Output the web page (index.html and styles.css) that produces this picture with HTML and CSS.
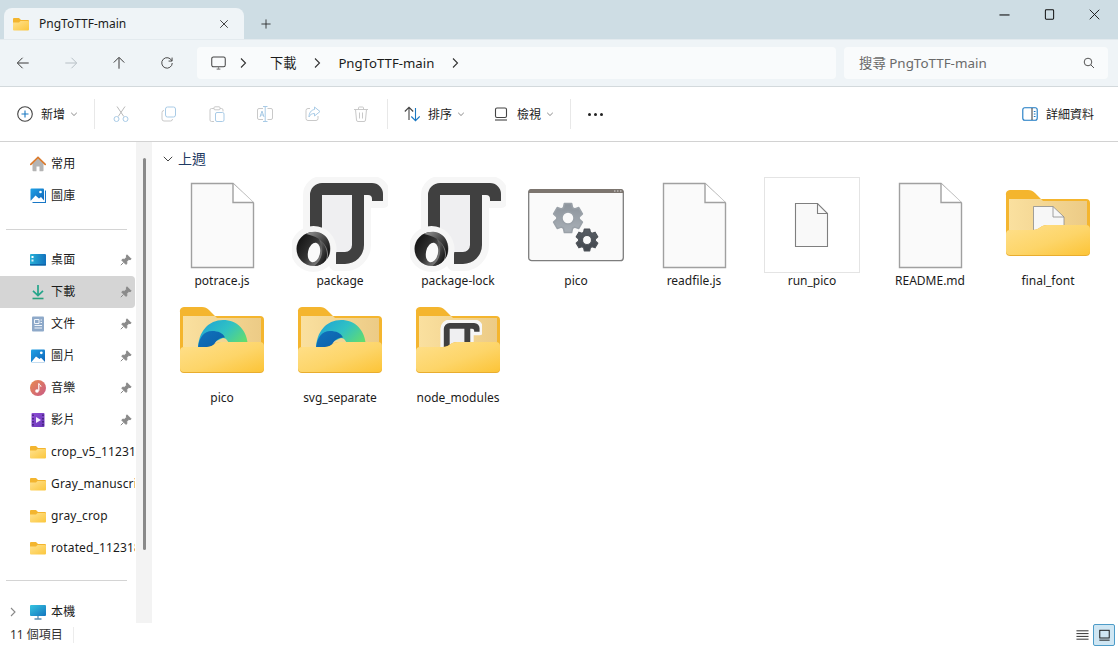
FILE: index.html
```html
<!DOCTYPE html>
<html lang="zh-Hant">
<head>
<meta charset="utf-8">
<title>PngToTTF-main</title>
<link rel="stylesheet" href="styles.css">
</head>
<body>
<svg class="defs" aria-hidden="true">
  <defs>
    <linearGradient id="gFront" x1="0" y1="0" x2="1" y2="1"><stop offset="0" stop-color="#ffe08c"/><stop offset=".55" stop-color="#fdd569"/><stop offset="1" stop-color="#fcc437"/></linearGradient>
    <linearGradient id="gPanel" x1="0" y1="0" x2="1" y2="0"><stop offset="0" stop-color="#fae09f"/><stop offset="1" stop-color="#eccb86"/></linearGradient>
    <linearGradient id="gEdge" x1="0" y1="0" x2="1" y2=".6"><stop offset="0" stop-color="#1c9fd8"/><stop offset=".55" stop-color="#30c1c4"/><stop offset="1" stop-color="#62dc6f"/></linearGradient>
    <linearGradient id="gEdgeDark" x1="0" y1="0" x2="1" y2="1"><stop offset="0" stop-color="#1172bd"/><stop offset="1" stop-color="#0a5ea6"/></linearGradient>
    <linearGradient id="gRing" x1="0" y1=".2" x2="1" y2=".8"><stop offset="0" stop-color="#101010"/><stop offset=".45" stop-color="#333"/><stop offset=".75" stop-color="#777"/><stop offset="1" stop-color="#a8a8a8"/></linearGradient>
    <linearGradient id="gRing2" x1="0" y1="0" x2="1" y2="1"><stop offset="0" stop-color="#9a9a9a"/><stop offset=".55" stop-color="#3d3d3d"/><stop offset="1" stop-color="#050505"/></linearGradient>
    <linearGradient id="gCogA" x1="0" y1="0" x2="0" y2="1"><stop offset="0" stop-color="#8c939b"/><stop offset="1" stop-color="#a9b0b7"/></linearGradient>
    <linearGradient id="gCogB" x1="0" y1="0" x2="0" y2="1"><stop offset="0" stop-color="#595f66"/><stop offset="1" stop-color="#41464c"/></linearGradient>
    <linearGradient id="gSmallFolder" x1="0" y1="0" x2="1" y2="1"><stop offset="0" stop-color="#ffe28f"/><stop offset="1" stop-color="#fbc63c"/></linearGradient>
    <linearGradient id="gBlue" x1="0" y1="0" x2="1" y2="1"><stop offset="0" stop-color="#1fa2e6"/><stop offset="1" stop-color="#0e63b8"/></linearGradient>
    <linearGradient id="gDesk" x1="0" y1="0" x2="1" y2="0"><stop offset="0" stop-color="#29b2d8"/><stop offset="1" stop-color="#1272bd"/></linearGradient>
    <linearGradient id="gMusic" x1="0" y1="0" x2="1" y2="1"><stop offset="0" stop-color="#e98b4e"/><stop offset="1" stop-color="#c95a86"/></linearGradient>
    <linearGradient id="gVideo" x1="0" y1="0" x2="1" y2="1"><stop offset="0" stop-color="#8f4fd6"/><stop offset="1" stop-color="#6a36b8"/></linearGradient>
    <linearGradient id="gPc" x1="0" y1="0" x2="1" y2="1"><stop offset="0" stop-color="#37c5e0"/><stop offset="1" stop-color="#1375bf"/></linearGradient>

    <symbol id="file" viewBox="0 0 96 96">
      <path d="M17.5 6.5H59L79.5 26V90.500H17.500Z" fill="#fafafa" stroke="#a0a0a0" stroke-width="1.4"/>
      <path d="M59 6.500V25.500H79.500" fill="#fff" stroke="#a0a0a0" stroke-width="1.4"/>
    </symbol>
    <symbol id="json-shape" viewBox="0 0 96 96">
      <path d="M18 60V18A12 12 0 0 1 30 6H80A11 11 0 0 1 91 17V24H80V22A4 4 0 0 0 76 18H72V68A19 19 0 0 1 53 87H44V75H53A7 7 0 0 0 60 68V18H30V60Z" fill="#f6f6f6" stroke="#f6f6f6" stroke-width="14" stroke-linejoin="round"/>
      <path d="M30 18H60V75H30Z" fill="#efeff1"/>
      <path d="M18 60V18A12 12 0 0 1 30 6H80A11 11 0 0 1 91 17V24H80V22A4 4 0 0 0 76 18H72V68A19 19 0 0 1 53 87H44V75H53A7 7 0 0 0 60 68V18H30V60Z" fill="#404040"/>
    </symbol>
    <symbol id="json" viewBox="0 0 96 96">
      <use href="#json-shape" width="96" height="96"/>
      <circle cx="21.500" cy="72" r="23" fill="#f6f6f6"/>
      <circle cx="21.500" cy="72" r="17" fill="url(#gRing)"/>
      <path d="M14 57C20 53 30 54 35 61C39 67 39 77 35 82C38 74 33 66 27 62C22 59 18 58 14 57Z" fill="url(#gRing2)"/>
      <path d="M27 62C33 67 37 75 34 83C31 87 27 89 22 89C28 85 31 78 30 71C29 67 28 64 27 62Z" fill="url(#gRing2)"/>
      <ellipse cx="22" cy="75.500" rx="6" ry="10" transform="rotate(12 22 75.500)" fill="#fafafa"/>
    </symbol>
    <symbol id="folder-back" viewBox="0 0 96 96">
      <path d="M6 18A4 4 0 0 1 10 13H28C31 13 33 14 35 16L41 22H86A4 4 0 0 1 90 26V60H6Z" fill="#f4b52e"/>
      <path d="M9 22H41L43 24H87V56H9Z" fill="url(#gPanel)"/>
    </symbol>
    <symbol id="folder-front" viewBox="0 0 96 96">
      <path d="M6 57A4 4 0 0 1 10 53H33C36 53 38 52 40 50.500C42 49 44 48 47 48H86A4 4 0 0 1 90 52V75A4 4 0 0 1 86 79H10A4 4 0 0 1 6 75Z" fill="#e9ad2e"/>
      <path d="M6 57A4 4 0 0 1 10 53H33C36 53 38 52 40 50.500C42 49 44 48 47 48H86A4 4 0 0 1 90 52V74A4 4 0 0 1 86 78H10A4 4 0 0 1 6 74Z" fill="url(#gFront)"/>
    </symbol>
    <symbol id="edge" viewBox="0 0 96 96">
      <path d="M24 56C24 37 35 26 49 26C63 26 74 36 74 54H56C55 47 52 44 49 44L40 48Z" fill="url(#gEdge)"/>
      <path d="M24 56C24 44 30 37 38 37C44 37 49 39 51 43.500C46 43 40 47 38 56Z" fill="url(#gEdgeDark)"/>
    </symbol>
    <symbol id="cog" viewBox="-1.2 -1.2 2.4 2.4">
      <path fill-rule="evenodd" stroke-width=".1" stroke-linejoin="round" d="M-.305-.685L-.242-.97L.242-.97L.305-.685L.441-.607L.719-.695L.961-.276L.746-.078L.746.078L.961.276L.719.695L.441.607L.305.685L.242.97L-.242.97L-.305.685L-.441.607L-.719.695L-.961.276L-.746.078L-.746-.078L-.961-.276L-.719-.695L-.441-.607ZM.4 0A.4 .4 0 1 0 -.4 0A.4 .4 0 1 0 .4 0Z"/>
    </symbol>
    <symbol id="sfolder" viewBox="0 0 16 16">
      <path d="M0 3A1 1 0 0 1 1 2H6L8 4H15A1 1 0 0 1 16 5V8H0Z" fill="#f3b52f"/>
      <path d="M0 6.500H6L7.500 5H15A1 1 0 0 1 16 6V13.500A1 1 0 0 1 15 14.500H1A1 1 0 0 1 0 13.500Z" fill="url(#gSmallFolder)"/>
    </symbol>
    <symbol id="pin" viewBox="0 0 12 12">
      <path d="M7 .8L11.200 5L10.200 5.600L8.700 5.500L6.800 7.500L6.800 9.800L5.800 10.300L1.800 6.200L2.400 5.300L4.600 5.200L6.500 3.300L6.400 1.700ZM3.500 8.500L.8 11.200" fill="#8a8a8a" stroke="#8a8a8a"/>
    </symbol>
    <symbol id="chev-small" viewBox="0 0 8 8"><path d="M1.200 2.800L4 5.500L6.800 2.800" fill="none" stroke="#8b8b8b"/></symbol>
    <symbol id="chev-right" viewBox="0 0 10 12"><path d="M3 1.500L7.500 6L3 10.500" fill="none" stroke="#333" stroke-width="1.100"/></symbol>
  </defs>
</svg>

<header class="titlebar">
  <div class="tab">
    <svg class="tab-folder"><use href="#sfolder"/></svg>
    <span class="tab-title">PngToTTF-main</span>
    <svg class="tab-close" viewBox="0 0 12 12"><path d="M1.500 1.500L10.500 10.500M10.500 1.500L1.500 10.500" stroke="#222" fill="none" stroke-width="1"/></svg>
  </div>
  <svg class="new-tab" viewBox="0 0 12 12"><path d="M6 .5V11.500M.5 6H11.500" stroke="#222" fill="none" stroke-width="1"/></svg>
  <div class="win-controls">
    <span class="win-btn"><svg viewBox="0 0 12 12"><path d="M.5 6.500H11.500" stroke="#111" fill="none" stroke-width="1.200"/></svg></span>
    <span class="win-btn"><svg viewBox="0 0 12 12"><rect x="1.500" y=".8" width="9" height="10.400" rx="1" stroke="#111" fill="none" stroke-width="1.100"/></svg></span>
    <span class="win-btn"><svg viewBox="0 0 12 12"><path d="M.8 .8L11.200 11.200M11.200 .8L.8 11.200" stroke="#111" fill="none"/></svg></span>
  </div>
</header>

<nav class="navbar">
  <div class="nav-buttons">
    <span class="nav-btn"><svg viewBox="0 0 16 16"><path d="M14.500 8H2M7.500 2L1.500 8L7.500 14" stroke="#333" fill="none" stroke-width="1.100"/></svg></span>
    <span class="nav-btn"><svg viewBox="0 0 16 16"><path d="M1.500 8H14M8.500 2L14.500 8L8.500 14" stroke="#b4bdc3" fill="none" stroke-width="1.100"/></svg></span>
    <span class="nav-btn"><svg viewBox="0 0 16 16"><path d="M8 14.500V2M2 7.500L8 1.500L14 7.500" stroke="#333" fill="none" stroke-width="1.100"/></svg></span>
    <span class="nav-btn"><svg viewBox="0 0 16 16"><path d="M13.500 5.500A6 6 0 1 0 14 8M13.800 1.800V5.800H9.800" stroke="#444" fill="none" stroke-width="1.100"/></svg></span>
  </div>
  <div class="address">
    <svg class="addr-pc" viewBox="0 0 16 16"><rect x=".8" y="1" width="14.400" height="10.500" rx="1.800" fill="none" stroke="#444" stroke-width="1.100"/><path d="M6 14H10M8 11.500V14" stroke="#888" fill="none" stroke-width="1.200"/></svg>
    <svg class="addr-chev first"><use href="#chev-right"/></svg>
    <span class="crumb">下載</span>
    <svg class="addr-chev"><use href="#chev-right"/></svg>
    <span class="crumb">PngToTTF-main</span>
    <svg class="addr-chev"><use href="#chev-right"/></svg>
  </div>
  <div class="search">
    <span class="search-text">搜尋 PngToTTF-main</span>
    <svg class="search-icon" viewBox="0 0 12 12"><circle cx="5" cy="5" r="3.800" fill="none" stroke="#555"/><path d="M7.800 7.800L11 11" stroke="#555" fill="none"/></svg>
  </div>
</nav>

<div class="toolbar">
  <div class="tool-labeled tool-new">
    <svg class="tool-icon" viewBox="0 0 16 16"><circle cx="8" cy="8" r="7.300" fill="none" stroke="#444" stroke-width="1.100"/><path d="M8 4.500V11.500M4.500 8H11.500" stroke="#1a78c2" fill="none" stroke-width="1.100"/></svg>
    <span>新增</span>
    <svg class="tool-chev"><use href="#chev-small"/></svg>
  </div>
  <i class="tool-sep first"></i>
  <div class="tool-group">
    <span class="tool-btn"><svg viewBox="0 0 16 16"><path d="M4 .5L10.800 10.500M12 .5L5.200 10.500" stroke="#b9b9b9" fill="none"/><circle cx="3.500" cy="13" r="2.500" fill="none" stroke="#a9cbe6"/><circle cx="12.500" cy="13" r="2.500" fill="none" stroke="#a9cbe6"/></svg></span>
    <span class="tool-btn"><svg viewBox="0 0 16 16"><rect x="4.500" y="1" width="10" height="10" rx="2" fill="none" stroke="#a9cbe6"/><path d="M3 4.500A2 2 0 0 0 1 6.500V13A2 2 0 0 0 3 15H9.500A2 2 0 0 0 11.500 13" fill="none" stroke="#c9c9c9"/></svg></span>
    <span class="tool-btn"><svg viewBox="0 0 16 16"><path d="M5 2.500H2.500A1.500 1.500 0 0 0 1 4V14A1.500 1.500 0 0 0 2.500 15.500H5M11 2.500H12.500A1.500 1.500 0 0 1 14 4V5.500" fill="none" stroke="#c9c9c9"/><rect x="5" y=".8" width="6" height="3" rx="1" fill="none" stroke="#c9c9c9"/><rect x="6.500" y="6.500" width="8.500" height="9" rx="1.500" fill="none" stroke="#a9cbe6"/></svg></span>
    <span class="tool-btn"><svg viewBox="0 0 16 16"><path d="M6 2.500H2A1.500 1.500 0 0 0 .5 4V12A1.500 1.500 0 0 0 2 13.500H6M10.500 2.500H14A1.500 1.500 0 0 1 15.500 4V12A1.500 1.500 0 0 1 14 13.500H10.500" fill="none" stroke="#c9c9c9"/><path d="M8.200 .5V15.500M6 .5H10.500M6 15.500H10.500" fill="none" stroke="#a9cbe6"/><path d="M3 11L5 5L7 11M3.700 9H6.300" fill="none" stroke="#a9cbe6"/></svg></span>
    <span class="tool-btn"><svg viewBox="0 0 16 16"><path d="M5 2.500H3A2 2 0 0 0 1 4.500V12.500A2 2 0 0 0 3 14.500H11A2 2 0 0 0 13 12.500V10" fill="none" stroke="#c9c9c9"/><path d="M9.500 1L15 5.500L9.500 10V7.500C7 7.500 5 8.500 4 11C4 7 6 4 9.500 3.500Z" fill="none" stroke="#a9cbe6"/></svg></span>
    <span class="tool-btn"><svg viewBox="0 0 16 16"><path d="M1 3.500H15M5.500 3.500V2A1 1 0 0 1 6.500 1H9.500A1 1 0 0 1 10.500 2V3.500M2.500 3.500L3.500 14A1.500 1.500 0 0 0 5 15.500H11A1.500 1.500 0 0 0 12.500 14L13.500 3.500M6.500 6.500V12.500M9.500 6.500V12.500" fill="none" stroke="#c9c9c9"/></svg></span>
  </div>
  <i class="tool-sep"></i>
  <div class="tool-labeled tool-sort">
    <svg class="tool-icon" viewBox="0 0 16 16"><path d="M5 14V1.500M.8 5.500L5 1.300L9.200 5.500" fill="none" stroke="#444" stroke-width="1.100"/><path d="M11.500 2V14.500M7.300 10.500L11.500 14.700L15.700 10.500" fill="none" stroke="#1a78c2" stroke-width="1.100"/></svg>
    <span>排序</span>
    <svg class="tool-chev"><use href="#chev-small"/></svg>
  </div>
  <div class="tool-labeled tool-view">
    <svg class="tool-icon" viewBox="0 0 16 16"><rect x="2.500" y="2" width="11" height="9.500" rx="1.500" fill="none" stroke="#444" stroke-width="1.100"/><path d="M2 14H14" stroke="#444" fill="none" stroke-width="1.100"/></svg>
    <span>檢視</span>
    <svg class="tool-chev"><use href="#chev-small"/></svg>
  </div>
  <i class="tool-sep view-sep"></i>
  <span class="tool-more"><i></i><i></i><i></i></span>
  <div class="tool-labeled tool-details">
    <svg class="tool-icon" viewBox="0 0 16 16"><rect x=".8" y="1.800" width="14.400" height="12.400" rx="2" fill="none" stroke="#1a78c2" stroke-width="1.100"/><path d="M10 2V14" stroke="#333" fill="none"/><path d="M11.800 5.500H13.500M11.800 8H13.500M11.800 10.500H13.500" stroke="#1a78c2" fill="none"/></svg>
    <span>詳細資料</span>
  </div>
</div>

<main class="main">
  <aside class="sidebar">
    <div class="side-row"><svg class="side-icon" viewBox="0 0 16 16"><path d="M2.500 7.500V14.500A.8 .8 0 0 0 3.300 15.300H6.500V10.500H9.500V15.300H12.700A.8 .8 0 0 0 13.500 14.500V7.500L8 2.500Z" fill="#b4b4b4"/><path d="M.8 8.300L8 1.500L15.200 8.300" fill="none" stroke="#d9792c" stroke-width="1.700" stroke-linecap="round"/></svg><span class="side-label">常用</span></div>
    <div class="side-row"><svg class="side-icon" viewBox="0 0 16 16"><rect x=".5" y=".5" width="13.500" height="12.500" rx="1" fill="url(#gBlue)"/><path d="M.5 13L5.500 7.500L9 10.500L11 9L14 12.500V13Z" fill="#fff"/><circle cx="10.500" cy="4" r="1.300" fill="#fff"/><path d="M15.500 2.500V14.500H2.500" fill="none" stroke="#1877c6" stroke-width="1.100"/></svg><span class="side-label">圖庫</span></div>
    <hr class="side-hr first">
    <div class="side-row"><svg class="side-icon" viewBox="0 0 16 16"><rect y="2" width="16" height="11.500" rx="1" fill="url(#gDesk)"/><path d="M0 12H16V13.500H0Z" fill="#1165a8"/><rect x="1.500" y="4" width="2" height="2" fill="#fff"/><rect x="1.500" y="7.500" width="2" height="2" fill="#d5f2fb"/></svg><span class="side-label">桌面</span><svg class="side-pin"><use href="#pin"/></svg></div>
    <div class="side-row selected"><svg class="side-icon" viewBox="0 0 16 16"><path d="M8 1V11M3 6.800L8 11.500L13 6.800" fill="none" stroke="#24a58a" stroke-width="1.700"/><path d="M2.500 14.500H13.500" stroke="#2aa07c" fill="none" stroke-width="1.600"/></svg><span class="side-label">下載</span><svg class="side-pin"><use href="#pin"/></svg></div>
    <div class="side-row"><svg class="side-icon" viewBox="0 0 16 16"><rect x="2" y=".5" width="12" height="15" rx="1" fill="#8ea9c9"/><path d="M4.500 3.500H9V7.500H4.500ZM10.500 4H12M10.500 6.500H12M4.500 9.500H12M4.500 12H12" stroke="#f1f5fa" stroke-width="1" fill="none"/></svg><span class="side-label">文件</span><svg class="side-pin"><use href="#pin"/></svg></div>
    <div class="side-row"><svg class="side-icon" viewBox="0 0 16 16"><rect x="1" y="1.500" width="14" height="13" rx="1" fill="url(#gBlue)"/><path d="M1 14.500L6 8.500L9.500 11L11 9.800L15 14V14.500Z" fill="#fff"/><circle cx="11.300" cy="4.800" r="1.400" fill="#fff"/></svg><span class="side-label">圖片</span><svg class="side-pin"><use href="#pin"/></svg></div>
    <div class="side-row"><svg class="side-icon" viewBox="0 0 16 16"><circle cx="8" cy="8" r="8" fill="url(#gMusic)"/><path d="M8.800 3.500V10.800" stroke="#fff" stroke-width="1.200" fill="none"/><path d="M8.800 3.500C9.500 5 11 5 11 6.800" stroke="#fff" fill="none"/><circle cx="7" cy="11" r="1.800" fill="#fff"/></svg><span class="side-label">音樂</span><svg class="side-pin"><use href="#pin"/></svg></div>
    <div class="side-row"><svg class="side-icon" viewBox="0 0 16 16"><rect x="1.500" y="1" width="13" height="14" rx="1" fill="url(#gVideo)"/><path d="M6 5L11 8L6 11Z" fill="#f4ecff"/><path d="M3 2.500V4M3 6V7.500M3 9V10.500M3 12V13.500M13 2.500V4M13 6V7.500M13 9V10.500M13 12V13.500" stroke="#2d1a5c" stroke-width="1.200" fill="none"/></svg><span class="side-label">影片</span><svg class="side-pin"><use href="#pin"/></svg></div>
    <div class="side-row"><svg class="side-icon"><use href="#sfolder"/></svg><span class="side-label">crop_v5_1123165</span></div>
    <div class="side-row"><svg class="side-icon"><use href="#sfolder"/></svg><span class="side-label">Gray_manuscript</span></div>
    <div class="side-row"><svg class="side-icon"><use href="#sfolder"/></svg><span class="side-label">gray_crop</span></div>
    <div class="side-row"><svg class="side-icon"><use href="#sfolder"/></svg><span class="side-label">rotated_1123181</span></div>
    <hr class="side-hr">
    <div class="side-row pc-row">
      <svg class="side-expand" viewBox="0 0 8 10"><path d="M2 1L6 5L2 9" fill="none" stroke="#888" stroke-width="1.100"/></svg>
      <svg class="side-icon" viewBox="0 0 16 16"><rect y="1" width="16" height="11" rx="1" fill="url(#gPc)"/><path d="M4.500 15H11.500M8 12V15" stroke="#5b8fb3" stroke-width="1.300" fill="none"/></svg><span class="side-label">本機</span>
    </div>
  </aside>
  <div class="scroll-track"><i class="scroll-thumb"></i></div>
  <section class="content">
    <div class="group-head">
      <svg class="group-chev" viewBox="0 0 10 6"><path d="M.8 .8L5 5L9.200 .8" fill="none" stroke="#444"/></svg>
      <span>上週</span>
    </div>
    <div class="files">
      <figure class="file"><svg class="file-icon"><use href="#file"/></svg><figcaption>potrace.js</figcaption></figure>
      <figure class="file"><svg class="file-icon"><use href="#json"/></svg><figcaption>package</figcaption></figure>
      <figure class="file"><svg class="file-icon"><use href="#json"/></svg><figcaption>package-lock</figcaption></figure>
      <figure class="file">
        <svg class="file-icon" viewBox="0 0 96 96">
          <rect x=".7" y="12.700" width="94.600" height="71" rx="3" fill="#fafafa" stroke="#7d7d7d" stroke-width="1.300"/>
          <path d="M.5 16V15A3 3 0 0 1 3.500 12H92.500A3 3 0 0 1 95.500 15V16Z" fill="#7c756f"/>
          <path d="M86 14H87.500M89 14H90.500M92 14H93.500" stroke="#ddd" fill="none"/>
          <use href="#cog" x="22" y="23" width="36" height="36" fill="url(#gCogA)" stroke="#9aa1a8"/>
          <use href="#cog" x="45.500" y="49.500" width="27" height="27" fill="url(#gCogB)" stroke="#4d5258"/>
        </svg>
        <figcaption>pico</figcaption>
      </figure>
      <figure class="file"><svg class="file-icon"><use href="#file"/></svg><figcaption>readfile.js</figcaption></figure>
      <figure class="file">
        <svg class="file-icon" viewBox="0 0 96 96">
          <rect x=".5" y=".5" width="95" height="95" fill="#fff" stroke="#e4e4e4"/>
          <path d="M31.500 26.500H53.500L63.500 36.500V69.500H31.500Z" fill="#f9f9f9" stroke="#7f7f7f" stroke-width="1.100"/>
          <path d="M53.500 26.500V36.500H63.500" fill="none" stroke="#7f7f7f" stroke-width="1.100"/>
        </svg>
        <figcaption>run_pico</figcaption>
      </figure>
      <figure class="file"><svg class="file-icon"><use href="#file"/></svg><figcaption>README.md</figcaption></figure>
      <figure class="file">
        <svg class="file-icon" viewBox="0 0 96 96">
          <use href="#folder-back" width="96" height="96"/>
          <path d="M33.500 29.500H53L64 40V56H33.500Z" fill="#f7f7f7" stroke="#8c8c8c" stroke-width=".8"/>
          <path d="M53 29.500V40H64" fill="none" stroke="#8c8c8c" stroke-width=".8"/>
          <use href="#folder-front" width="96" height="96"/>
        </svg>
        <figcaption>final_font</figcaption>
      </figure>
      <figure class="file">
        <svg class="file-icon" viewBox="0 0 96 96">
          <use href="#folder-back" width="96" height="96"/>
          <use href="#edge" width="96" height="96"/>
          <use href="#folder-front" width="96" height="96"/>
        </svg>
        <figcaption>pico</figcaption>
      </figure>
      <figure class="file">
        <svg class="file-icon" viewBox="0 0 96 96">
          <use href="#folder-back" width="96" height="96"/>
          <use href="#edge" width="96" height="96"/>
          <use href="#folder-front" width="96" height="96"/>
        </svg>
        <figcaption>svg_separate</figcaption>
      </figure>
      <figure class="file">
        <svg class="file-icon" viewBox="0 0 96 96">
          <use href="#folder-back" width="96" height="96"/>
          <use href="#json-shape" x="25" y="26" width="47" height="47"/>
          <use href="#folder-front" width="96" height="96"/>
        </svg>
        <figcaption>node_modules</figcaption>
      </figure>
    </div>
  </section>
</main>

<footer class="statusbar">
  <span class="status-count">11 個項目</span>
  <i class="status-sep"></i>
  <div class="view-switch">
    <span class="view-btn"><svg viewBox="0 0 14 12"><path d="M.5 1.500H13.500M.5 4.500H13.500M.5 7.500H13.500M.5 10.500H13.500" stroke="#222" fill="none"/></svg></span>
    <span class="view-btn active"><svg viewBox="0 0 14 14"><rect x="1.500" y="1.500" width="11" height="9" fill="none" stroke="#111" stroke-width="1.100"/><path d="M1 13H13" stroke="#111" fill="none" stroke-width="1.100"/></svg></span>
  </div>
</footer>
</body>
</html>
```

FILE: styles.css
```css
* { box-sizing: border-box; }
html, body { margin: 0; padding: 0; }
body {
  width: 1118px;
  height: 646px;
  overflow: hidden;
  background: #fff;
  color: #1b1b1b;
  font: 12px/16px "Noto Sans", "Noto Sans CJK TC", sans-serif;
  display: flex;
  flex-direction: column;
}
svg { display: block; flex: none; }
.defs { position: absolute; width: 0; height: 0; }

/* title bar */
.titlebar {
  height: 39px;
  flex: none;
  background: #cedde4;
  display: flex;
  align-items: flex-start;
}
.tab {
  width: 240px;
  height: 31px;
  margin: 8px 0 0 4px;
  padding: 0 15px 0 9px;
  background: #eff4f7;
  border-radius: 8px 8px 0 0;
  display: flex;
  align-items: center;
}
.tab-folder { width: 16px; height: 16px; }
.tab-title { margin-left: 10px; flex: 1; font-size: 12px; }
.tab-close { width: 10px; height: 10px; }
.new-tab { width: 10px; height: 10px; margin: 19px 0 0 17px; }
.win-controls { margin-left: auto; margin-right: 1px; display: flex; }
.win-btn {
  width: 45px;
  height: 28px;
  display: flex;
  align-items: center;
  justify-content: center;
}
.win-btn svg { width: 11px; height: 11px; }

/* navigation */
.navbar {
  height: 48px;
  flex: none;
  background: #eff4f7;
  border-bottom: 1px solid #d3d9dc;
  border-top: 1px solid #e3eaee;
  padding-top: 7px;
  display: flex;
  align-items: flex-start;
}
.nav-buttons { display: flex; margin-left: -1px; margin-right: 6px; }
.nav-btn {
  width: 48px;
  height: 32px;
  display: flex;
  align-items: center;
  justify-content: center;
}
.nav-btn svg { width: 14px; height: 14px; }
.address {
  width: 639px;
  height: 32px;
  background: #f9fbfc;
  border-radius: 4px;
  padding-left: 14px;
  display: flex;
  align-items: center;
  font-size: 13.2px;
}
.addr-pc { width: 15px; height: 15px; }
.addr-chev { width: 10px; height: 12px; margin: 0 16px; }
.addr-chev.first { margin-left: 12px; margin-right: 22px; }
.crumb { line-height: 20px; }
.search {
  width: 264px;
  height: 32px;
  margin-left: 8px;
  background: #f9fbfc;
  border-radius: 4px;
  padding: 0 13px 0 15px;
  display: flex;
  align-items: center;
  justify-content: space-between;
  font-size: 13.4px;
  color: #6a6a6a;
}
.search-icon { width: 12px; height: 12px; }

/* toolbar */
.toolbar {
  height: 55px;
  flex: none;
  border-bottom: 1px solid #d2d2d2;
  display: flex;
  align-items: center;
  padding-left: 17px;
}
.tool-labeled { display: flex; align-items: center; }
.tool-labeled span { padding-top: 2px; }
.tool-icon { width: 16px; height: 16px; margin-right: 8px; }
.tool-chev { width: 8px; height: 8px; margin-left: 5px; }
.tool-sep { width: 1px; height: 30px; background: #e8e8e8; margin: 0 2px; }
.tool-sep.first { margin-left: 16px; }
.tool-group { display: flex; }
.tool-btn {
  width: 48px;
  height: 32px;
  display: flex;
  align-items: center;
  justify-content: center;
}
.tool-btn svg { width: 16px; height: 16px; }
.tool-sort { margin-left: 14px; }
.tool-view { margin-left: 28px; }
.view-sep { margin-left: 16px; margin-right: 0; }
.tool-more {
  width: 48px;
  display: flex;
  justify-content: center;
  gap: 3px;
}
.tool-more i { width: 3px; height: 3px; border-radius: 50%; background: #222; }
.tool-details { margin-left: auto; padding-right: 24px; }

/* main area */
.main { flex: 1; min-height: 0; display: flex; }
.sidebar { width: 136px; flex: none; padding-top: 6px; }
.side-row {
  height: 32px;
  width: 135px;
  padding-left: 30px;
  display: flex;
  align-items: center;
  border-radius: 0 4px 4px 0;
}
.side-row.selected { background: #d5d5d5; }
.side-icon { width: 16px; height: 16px; margin-right: 5px; }
.side-label { flex: 1; min-width: 0; white-space: nowrap; overflow: hidden; letter-spacing: .15px; }
.side-pin { width: 12px; height: 12px; margin-right: 3px; }
.side-hr {
  width: 121px;
  height: 1px;
  border: 0;
  background: #d4d4d4;
  margin: 16px 0 15px 6px;
}
.side-hr.first { margin-top: 17px; margin-bottom: 14px; }
.pc-row { padding-left: 9px; }
.side-expand { width: 8px; height: 10px; margin-right: 13px; }
.scroll-track {
  width: 16px;
  flex: none;
  background: #f3f3f3;
  padding: 16px 0 0 7px;
}
.scroll-thumb { display: block; width: 3px; height: 392px; border-radius: 2px; background: #8a8a8a; }

.content { flex: 1; min-width: 0; padding-left: 11px; }
.group-head {
  height: 35px;
  display: flex;
  align-items: center;
  padding: 0 0 1px 0;
  color: #1f3b63;
  font-size: 14px;
}
.group-chev { width: 10px; height: 6px; margin-right: 5px; }
.files {
  display: grid;
  grid-template-columns: repeat(8, 118px);
  grid-auto-rows: 117px;
}
.file {
  margin: 0;
  display: flex;
  flex-direction: column;
  align-items: center;
}
.file-icon { width: 96px; height: 96px; }
.file figcaption { margin-top: -1px; line-height: 17px; white-space: nowrap; }

/* status bar */
.statusbar {
  height: 23px;
  flex: none;
  display: flex;
  align-items: center;
  padding-left: 10px;
  color: #333;
}
.status-count { width: 63px; }
.status-sep { width: 1px; height: 16px; background: #ececec; }
.view-switch { margin-left: auto; display: flex; margin-right: 3px; gap: 0; }
.view-btn {
  width: 22px;
  height: 22px;
  display: flex;
  align-items: center;
  justify-content: center;
}
.view-btn svg { width: 13px; height: 12px; }
.view-btn.active { background: #cfe6f3; border: 1px solid #4e9cc8; border-radius: 2px; }
```
